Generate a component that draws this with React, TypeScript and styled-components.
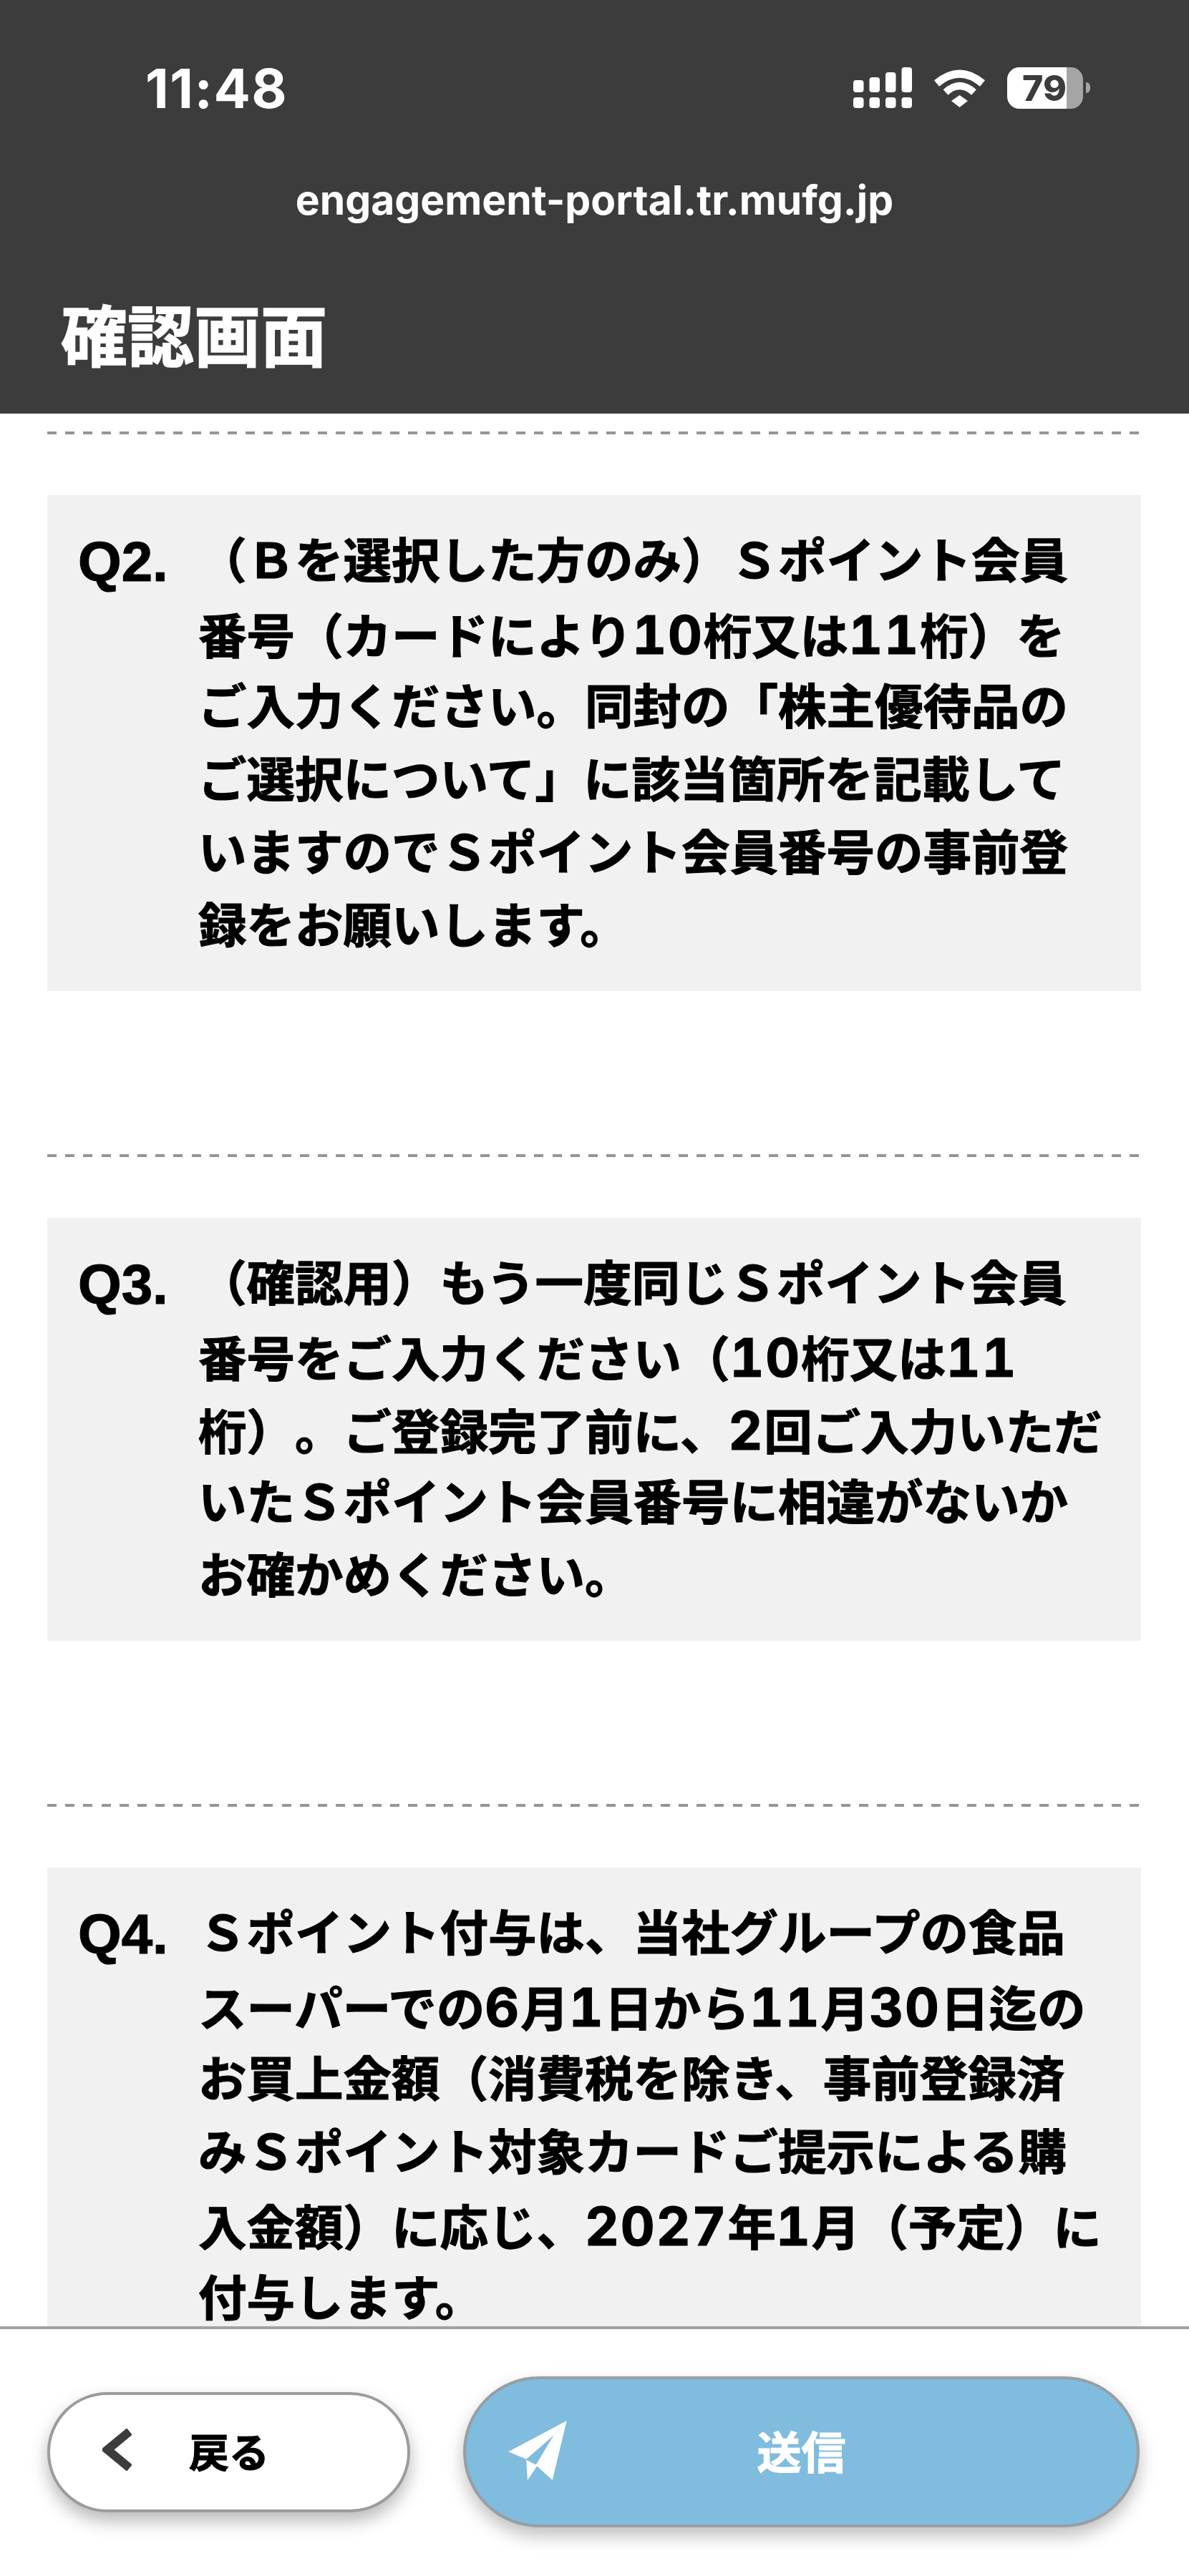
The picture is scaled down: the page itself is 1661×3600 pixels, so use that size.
import React from "react"
import styled, { createGlobalStyle } from "styled-components"

const sans = `"Liberation Sans", "Noto Sans CJK JP", sans-serif`
const ui = `Inter, "Liberation Sans", sans-serif`

const questions = [
  {
    label: "Q2.",
    lines: [
      "（Ｂを選択した方のみ）Ｓポイント会員",
      "番号（カードにより10桁又は11桁）を",
      "ご入力ください。同封の「株主優待品の",
      "ご選択について」に該当箇所を記載して",
      "いますのでＳポイント会員番号の事前登",
      "録をお願いします。",
    ],
  },
  {
    label: "Q3.",
    lines: [
      "（確認用）もう一度同じＳポイント会員",
      "番号をご入力ください（10桁又は11",
      "桁）。ご登録完了前に、2回ご入力いただ",
      "いたＳポイント会員番号に相違がないか",
      "お確かめください。",
    ],
  },
  {
    label: "Q4.",
    lines: [
      "Ｓポイント付与は、当社グループの食品",
      "スーパーでの6月1日から11月30日迄の",
      "お買上金額（消費税を除き、事前登録済",
      "みＳポイント対象カードご提示による購",
      "入金額）に応じ、2027年1月（予定）に",
      "付与します。",
    ],
  },
]

export default function App() {
  return (
    <Page>
      <GlobalStyle />
      <Header>
        <StatusBar>
          <Time>11:48</Time>
          <StatusIcons>
            <SignalIcon />
            <WifiIcon />
            <Battery>79</Battery>
          </StatusIcons>
        </StatusBar>
        <Url>engagement-portal.tr.mufg.jp</Url>
        <Title>確認画面</Title>
      </Header>
      <Main>
        {questions.map(q => (
          <Section key={q.label}>
            <Dashed />
            <QuestionBox>
              <QuestionLabel>{q.label}</QuestionLabel>
              <QuestionText>
                {q.lines.map(line => (
                  <Line key={line}>
                    {line.split(/(\d+)/).map((part, i) =>
                      /^\d+$/.test(part) ? <Num key={i}>{part}</Num> : part
                    )}
                  </Line>
                ))}
              </QuestionText>
            </QuestionBox>
          </Section>
        ))}
      </Main>
      <Footer>
        <BackButton>
          <ChevronIcon />
          <span>戻る</span>
        </BackButton>
        <SendButton>
          <PlaneIcon />
          <span>送信</span>
        </SendButton>
      </Footer>
    </Page>
  )
}

function SignalIcon() {
  return (
    <svg width="82" height="58" viewBox="0 0 82 58" fill="#fff">
      <rect x="0" y="18" width="14.5" height="17" rx="4" />
      <rect x="22.5" y="14" width="14.5" height="21" rx="4" />
      <rect x="45" y="7" width="14.5" height="28" rx="4" />
      <rect x="67.5" y="0" width="14.5" height="35" rx="4" />
      <rect x="0" y="42" width="14.5" height="15" rx="4" />
      <rect x="22.5" y="42" width="14.5" height="15" rx="4" />
      <rect x="45" y="42" width="14.5" height="15" rx="4" />
      <rect x="67.5" y="42" width="14.5" height="15" rx="4" />
    </svg>
  )
}

function WifiIcon() {
  return (
    <svg width="71" height="58" viewBox="0 0 71 58" fill="none">
      <g transform="translate(0 3)">
        <path d="M3.5 19.5 Q35.5 -7.3 67.5 19.5" stroke="#fff" strokeWidth="11" />
        <path d="M16 32 Q35.5 14 55.5 32" stroke="#fff" strokeWidth="10" />
        <path d="M24 44 L35.5 36 L47 44 L35.5 53 Z" fill="#fff" />
      </g>
    </svg>
  )
}

function ChevronIcon() {
  return (
    <svg width="41" height="59" viewBox="0 0 41 59" fill="none">
      <path d="M38 4 L7 29.5 L38 55" stroke="#3c3c3c" strokeWidth="12" />
    </svg>
  )
}

function PlaneIcon() {
  return (
    <PlaneSvg width="82" height="83" viewBox="0 0 245 250" fill="#fff">
      <path d="M245 0 L0 130 L75 162 L190 62 Z" />
      <path d="M245 0 L190 62 L115 187 L185 250 Z" />
      <path d="M75 165 L122 188 L80 250 Z" />
    </PlaneSvg>
  )
}

const GlobalStyle = createGlobalStyle`
  html,
  body {
    margin: 0;
    padding: 0;
    background: #fff;
  }
`

const Page = styled.div`
  width: 1661px;
  height: 3600px;
  display: flex;
  flex-direction: column;
  overflow: hidden;
  font-family: ${sans};
  color: #000;
  text-spacing-trim: space-all;
`

const Header = styled.header`
  height: 578px;
  box-sizing: border-box;
  flex-shrink: 0;
  padding-top: 94px;
  display: flex;
  flex-direction: column;
  background: #3c3c3c;
  color: #fff;
`

const StatusBar = styled.div`
  height: 58px;
  padding: 0 138px 0 203px;
  display: flex;
  align-items: center;
  justify-content: space-between;
`

const Time = styled.div`
  font-family: ${ui};
  font-size: 76px;
  font-weight: 700;
  letter-spacing: 1.5px;
`

const StatusIcons = styled.div`
  display: flex;
  align-items: center;
  gap: 31px;
`

const Battery = styled.div`
  position: relative;
  width: 106px;
  height: 58px;
  margin-right: 10px;
  padding-right: 2px;
  box-sizing: border-box;
  border-radius: 17px;
  display: flex;
  align-items: center;
  justify-content: center;
  background: linear-gradient(90deg, #fff 0 78.3%, #a5a5a5 78.3% 100%);
  color: #3c3c3c;
  font-family: ${ui};
  font-size: 50px;
  font-weight: 800;

  &::after {
    content: "";
    position: absolute;
    right: -10px;
    top: 21px;
    width: 6px;
    height: 15px;
    border-radius: 0 8px 8px 0;
    background: #a5a5a5;
  }
`

const Url = styled.div`
  margin-top: 98px;
  height: 60px;
  line-height: 60px;
  text-align: center;
  font-family: ${ui};
  font-size: 57px;
  font-weight: 700;
`

const Title = styled.h1`
  margin: 117px 0 0;
  padding-left: 85px;
  font-size: 93px;
  line-height: 92px;
  font-weight: 700;
  -webkit-text-stroke: 1.5px #fff;
`

const Main = styled.main`
  flex: 1;
  min-height: 0;
  overflow: hidden;
  padding: 25px 67px 0 66px;
`

const Section = styled.section`
  margin-bottom: 228px;
`

const Dashed = styled.div`
  height: 4px;
  margin-bottom: 85px;
  background: repeating-linear-gradient(90deg, #959595 0 13px, transparent 13px 25.2px);
`

const QuestionBox = styled.div`
  padding: 42px 20px 39px 43px;
  display: grid;
  grid-template-columns: 168px 1fr;
  background: #f1f1f1;
  font-size: 67.5px;
  line-height: 102px;
  font-weight: 700;
  -webkit-text-stroke: 1.2px #000;
`

const QuestionLabel = styled.div`
  font-size: 78px;
`

const QuestionText = styled.div`
  white-space: nowrap;
`

const Line = styled.div`
  height: 102px;
`

const Num = styled.span`
  font-family: ${ui};
  font-size: 74px;
  letter-spacing: 2px;
  font-feature-settings: "tnum";
`

const Footer = styled.footer`
  height: 349px;
  box-sizing: border-box;
  flex-shrink: 0;
  padding: 66px 69px 0 66px;
  display: flex;
  align-items: flex-start;
  gap: 74px;
  position: relative;
  background: #fff;
  border-top: 4px solid #a2a2a2;
`

const BackButton = styled.button`
  width: 507px;
  height: 168px;
  margin-top: 22px;
  padding: 0 0 8px 73px;
  box-sizing: border-box;
  display: flex;
  align-items: center;
  gap: 80px;
  border: 4px solid #9c9c9c;
  border-radius: 84px;
  background: #fff;
  box-shadow: 0 12px 24px rgba(0, 0, 0, 0.28);
  color: #000;
  font-family: ${sans};
  font-size: 56px;
  font-weight: 700;
  -webkit-text-stroke: 1.2px #000;
`

const SendButton = styled.button`
  flex: 1;
  height: 211px;
  padding: 0 0 6px;
  position: relative;
  display: flex;
  align-items: center;
  justify-content: center;
  box-sizing: border-box;
  border: 4px solid #989ea3;
  border-radius: 106px;
  background: #7fbcde;
  box-shadow: 0 12px 24px rgba(0, 0, 0, 0.25);
  color: #fff;
  font-family: ${sans};
  font-size: 62px;
  font-weight: 700;
  -webkit-text-stroke: 1.2px #fff;
`

const PlaneSvg = styled.svg`
  position: absolute;
  left: 59px;
  top: 58px;
`
